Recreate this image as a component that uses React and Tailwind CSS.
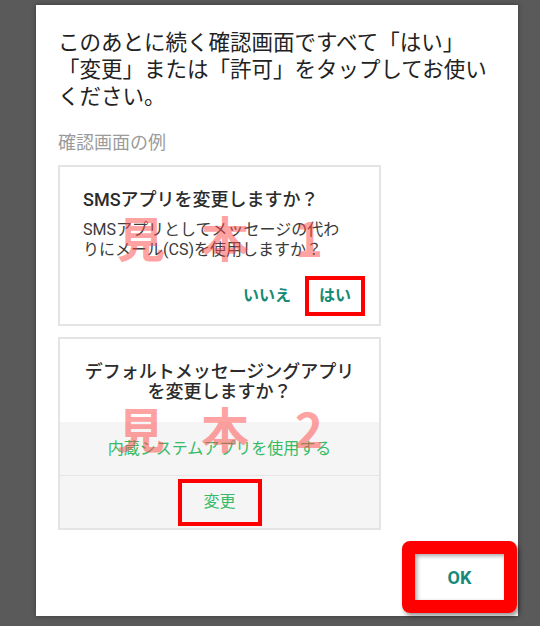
const jp = { fontFamily: 'Roboto, "Noto Sans CJK JP", sans-serif' };

function Watermark({ label, top }) {
  return (
    <div
      className={`pointer-events-none absolute left-[57px] flex gap-[36px] text-[48px] leading-[48px] font-bold text-[rgba(255,70,70,0.5)] ${top}`}
      style={{ fontFamily: '"Noto Sans CJK JP", sans-serif' }}
    >
      {["見", "本", label].map((ch) => (
        <span key={ch} className="w-[48px] text-center">
          {ch}
        </span>
      ))}
    </div>
  );
}

function SmsCard() {
  return (
    <div className="relative flex flex-col border-2 border-[#e4e4e4] bg-white pl-[23px] pt-[21px] pb-[8px] pr-[14px]">
      <p className="text-[18px] leading-[24px] font-medium text-[#2b2b2b]">
        SMSアプリを変更しますか？
      </p>
      <p className="mt-[8px] text-[16px] leading-[20px] text-[#3a3a3a]">
        SMSアプリとしてメッセージの代わ
        <br />
        りにメール(CS)を使用しますか？
      </p>
      <div className="mt-[16px] flex justify-end">
        <span className="border-4 border-transparent px-[10px] py-[8px] text-[16px] leading-[16px] font-bold text-[#168a74]">
          いいえ
        </span>
        <span className="border-4 border-[#ff0000] px-[10px] py-[8px] text-[16px] leading-[16px] font-bold text-[#168a74]">
          はい
        </span>
      </div>
      <Watermark label="1" top="top-[45px]" />
    </div>
  );
}

function DefaultAppCard() {
  return (
    <div className="relative mt-[11px] flex flex-col border-2 border-[#e4e4e4] bg-white">
      <p className="px-[12px] pt-[23px] pb-[20px] text-center text-[18px] leading-[20px] font-medium text-[#2b2b2b]">
        デフォルトメッセージングアプリ
        <br />
        を変更しますか？
      </p>
      <div className="bg-[#f5f5f5]">
        <div className="flex h-[53px] items-center justify-center text-[16px] text-[#38bb66]">
          内蔵システムアプリを使用する
        </div>
        <div className="h-px bg-[#e6e6e6]" />
        <div className="flex h-[52px] items-center justify-center">
          <span className="flex h-[47px] w-[84px] items-center justify-center border-4 border-[#ff0000] text-[16px] text-[#38bb66]">
            変更
          </span>
        </div>
      </div>
      <Watermark label="2" top="top-[64px]" />
    </div>
  );
}

export default function App() {
  return (
    <div className="h-[626px] w-[540px] overflow-hidden bg-[#5a5a5a] pl-[36px] pt-[5px]" style={jp}>
      <div className="flex h-[611px] w-[482px] flex-col bg-white pl-[22px] pt-[24px] shadow-[0_0_5px_rgba(0,0,0,0.35)]">
        <h2 className="text-[21.5px] leading-[27px] text-[#222]">
          このあとに続く確認画面ですべて「はい」
          <br />
          「変更」または「許可」をタップしてお使い
          <br />
          ください。
        </h2>
        <p className="mt-[21px] text-[18px] leading-[24px] text-[#9b9b9b]">確認画面の例</p>

        <div className="mt-[10px] w-[323px]">
          <SmsCard />
          <DefaultAppCard />
        </div>

        <div className="mt-auto flex justify-end pb-[16px] pr-[14px]">
          <div className="relative">
            <button className="flex h-[46px] w-[89px] items-center justify-center bg-white text-[18px] font-bold text-[#168a7a] shadow-[inset_2px_2px_4px_rgba(0,0,0,0.35)]">
              OK
            </button>
            <div className="pointer-events-none absolute -inset-[13px] rounded-[8px] border-[13px] border-[#ff0000] shadow-[2px_3px_4px_rgba(0,0,0,0.4)]" />
          </div>
        </div>
      </div>
    </div>
  );
}
